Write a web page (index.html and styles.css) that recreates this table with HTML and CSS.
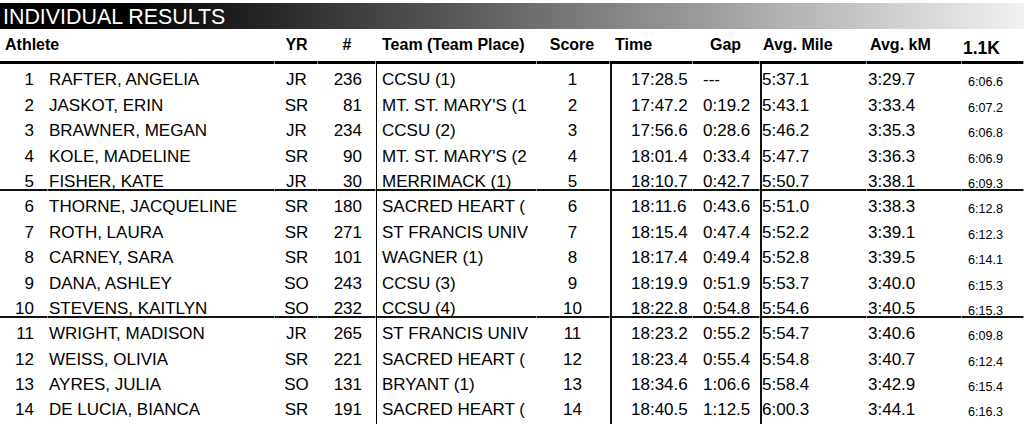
FILE: index.html
```html
<!DOCTYPE html>
<html lang="en">
<head>
<meta charset="utf-8">
<title>Individual Results</title>
<link rel="stylesheet" href="styles.css">
</head>
<body>
<div class="title">INDIVIDUAL RESULTS</div>
<div class="cols head">
  <div class="h h-ath">Athlete</div>
  <div class="h h-yr">YR</div>
  <div class="h h-num">#</div>
  <div class="h h-team">Team (Team Place)</div>
  <div class="h h-score">Score</div>
  <div class="h h-time">Time</div>
  <div class="h h-gap">Gap</div>
  <div class="h h-mile">Avg. Mile</div>
  <div class="h h-km">Avg. kM</div>
  <div class="h h-split">1.1K</div>
</div>
<div class="rows">
  <div class="cols row"><div class="d pl">1</div><div class="d nm">RAFTER, ANGELIA</div><div class="d yr">JR</div><div class="d num">236</div><div class="d team">CCSU (1)</div><div class="d score">1</div><div class="d time">17:28.5</div><div class="d gap">---</div><div class="d mile">5:37.1</div><div class="d km">3:29.7</div><div class="d split">6:06.6</div></div>
  <div class="cols row"><div class="d pl">2</div><div class="d nm">JASKOT, ERIN</div><div class="d yr">SR</div><div class="d num">81</div><div class="d team">MT. ST. MARY'S (1</div><div class="d score">2</div><div class="d time">17:47.2</div><div class="d gap">0:19.2</div><div class="d mile">5:43.1</div><div class="d km">3:33.4</div><div class="d split">6:07.2</div></div>
  <div class="cols row"><div class="d pl">3</div><div class="d nm">BRAWNER, MEGAN</div><div class="d yr">JR</div><div class="d num">234</div><div class="d team">CCSU (2)</div><div class="d score">3</div><div class="d time">17:56.6</div><div class="d gap">0:28.6</div><div class="d mile">5:46.2</div><div class="d km">3:35.3</div><div class="d split">6:06.8</div></div>
  <div class="cols row"><div class="d pl">4</div><div class="d nm">KOLE, MADELINE</div><div class="d yr">SR</div><div class="d num">90</div><div class="d team">MT. ST. MARY'S (2</div><div class="d score">4</div><div class="d time">18:01.4</div><div class="d gap">0:33.4</div><div class="d mile">5:47.7</div><div class="d km">3:36.3</div><div class="d split">6:06.9</div></div>
  <div class="cols row sep"><div class="d pl">5</div><div class="d nm">FISHER, KATE</div><div class="d yr">JR</div><div class="d num">30</div><div class="d team">MERRIMACK (1)</div><div class="d score">5</div><div class="d time">18:10.7</div><div class="d gap">0:42.7</div><div class="d mile">5:50.7</div><div class="d km">3:38.1</div><div class="d split">6:09.3</div></div>
  <div class="cols row"><div class="d pl">6</div><div class="d nm">THORNE, JACQUELINE</div><div class="d yr">SR</div><div class="d num">180</div><div class="d team">SACRED HEART (</div><div class="d score">6</div><div class="d time">18:11.6</div><div class="d gap">0:43.6</div><div class="d mile">5:51.0</div><div class="d km">3:38.3</div><div class="d split">6:12.8</div></div>
  <div class="cols row"><div class="d pl">7</div><div class="d nm">ROTH, LAURA</div><div class="d yr">SR</div><div class="d num">271</div><div class="d team">ST FRANCIS UNIV</div><div class="d score">7</div><div class="d time">18:15.4</div><div class="d gap">0:47.4</div><div class="d mile">5:52.2</div><div class="d km">3:39.1</div><div class="d split">6:12.3</div></div>
  <div class="cols row"><div class="d pl">8</div><div class="d nm">CARNEY, SARA</div><div class="d yr">SR</div><div class="d num">101</div><div class="d team">WAGNER (1)</div><div class="d score">8</div><div class="d time">18:17.4</div><div class="d gap">0:49.4</div><div class="d mile">5:52.8</div><div class="d km">3:39.5</div><div class="d split">6:14.1</div></div>
  <div class="cols row"><div class="d pl">9</div><div class="d nm">DANA, ASHLEY</div><div class="d yr">SO</div><div class="d num">243</div><div class="d team">CCSU (3)</div><div class="d score">9</div><div class="d time">18:19.9</div><div class="d gap">0:51.9</div><div class="d mile">5:53.7</div><div class="d km">3:40.0</div><div class="d split">6:15.3</div></div>
  <div class="cols row sep"><div class="d pl">10</div><div class="d nm">STEVENS, KAITLYN</div><div class="d yr">SO</div><div class="d num">232</div><div class="d team">CCSU (4)</div><div class="d score">10</div><div class="d time">18:22.8</div><div class="d gap">0:54.8</div><div class="d mile">5:54.6</div><div class="d km">3:40.5</div><div class="d split">6:15.3</div></div>
  <div class="cols row"><div class="d pl">11</div><div class="d nm">WRIGHT, MADISON</div><div class="d yr">JR</div><div class="d num">265</div><div class="d team">ST FRANCIS UNIV</div><div class="d score">11</div><div class="d time">18:23.2</div><div class="d gap">0:55.2</div><div class="d mile">5:54.7</div><div class="d km">3:40.6</div><div class="d split">6:09.8</div></div>
  <div class="cols row"><div class="d pl">12</div><div class="d nm">WEISS, OLIVIA</div><div class="d yr">SR</div><div class="d num">221</div><div class="d team">SACRED HEART (</div><div class="d score">12</div><div class="d time">18:23.4</div><div class="d gap">0:55.4</div><div class="d mile">5:54.8</div><div class="d km">3:40.7</div><div class="d split">6:12.4</div></div>
  <div class="cols row"><div class="d pl">13</div><div class="d nm">AYRES, JULIA</div><div class="d yr">SO</div><div class="d num">131</div><div class="d team">BRYANT (1)</div><div class="d score">13</div><div class="d time">18:34.6</div><div class="d gap">1:06.6</div><div class="d mile">5:58.4</div><div class="d km">3:42.9</div><div class="d split">6:15.4</div></div>
  <div class="cols row"><div class="d pl">14</div><div class="d nm">DE LUCIA, BIANCA</div><div class="d yr">SR</div><div class="d num">191</div><div class="d team">SACRED HEART (</div><div class="d score">14</div><div class="d time">18:40.5</div><div class="d gap">1:12.5</div><div class="d mile">6:00.3</div><div class="d km">3:44.1</div><div class="d split">6:16.3</div></div>
  <div class="cols row filler"><div class="d pl"></div><div class="d nm"></div><div class="d yr"></div><div class="d num"></div><div class="d team"></div><div class="d score"></div><div class="d time"></div><div class="d gap"></div><div class="d mile"></div><div class="d km"></div><div class="d split"></div></div>
</div>
</body>
</html>
```

FILE: styles.css
```css
html, body {
  margin: 0;
  padding: 0;
  background: #fff;
}
body {
  font-family: "Liberation Sans", Arial, sans-serif;
  color: #000;
  overflow: hidden;
}
.title {
  margin-top: 3px;
  height: 26px;
  box-sizing: border-box;
  padding: 3px 0 0 3px;
  font-size: 21.4px;
  line-height: 23px;
  color: #fff;
  white-space: nowrap;
  background: linear-gradient(to right, #000 12%, #f2f2f2 100%);
}
.cols {
  display: grid;
  grid-template-columns: 48px 227px 43px 58px 161px 73px 83px 67px 107px 95px 62px;
}
.head {
  height: 35px;
}
.h {
  display: flex;
  align-items: flex-end;
  box-sizing: border-box;
  padding-bottom: 10px;
  font-weight: bold;
  font-size: 16px;
  white-space: nowrap;
  background: linear-gradient(to right, #000 calc(100% - 1px), #999 calc(100% - 1px)) left bottom / 100% 3px no-repeat;
}
.h-ath { grid-column: span 2; padding-left: 5px; }
.h-yr, .h-num, .h-score { justify-content: center; }
.h-team { padding-left: 6px; }
.h-score { padding-right: 3px; }
.h-time { padding-left: 5px; }
.h-gap { padding-left: 17px; }
.h-mile { padding-left: 3px; }
.h-km { padding-left: 3px; }
.h-split { padding-left: 1px; padding-bottom: 5px; font-size: 17.5px; }

.row {
  height: 25.4px;
}
.d {
  display: flex;
  align-items: flex-end;
  box-sizing: border-box;
  font-size: 17px;
  line-height: 18px;
  white-space: nowrap;
}
.sep .d {
  background: linear-gradient(to right, #111 calc(100% - 1px), #888 calc(100% - 1px)) left bottom / 100% 2px no-repeat;
}
.pl { justify-content: flex-end; padding-right: 14px; }
.nm { padding-left: 1px; }
.yr { justify-content: center; }
.num { justify-content: flex-end; padding-right: 14px; }
.team { padding-left: 5px; border-left: 1px solid #000; }
.score { justify-content: center; padding-right: 2px; }
.time { padding-left: 19px; border-left: 2px solid #111; }
.gap { padding-left: 10px; }
.mile { padding-left: 0; border-left: 2px solid #111; }
.km { padding-left: 1px; }
.split { padding-left: 6px; font-size: 12.6px; line-height: 14px; padding-bottom: 0; }
```
